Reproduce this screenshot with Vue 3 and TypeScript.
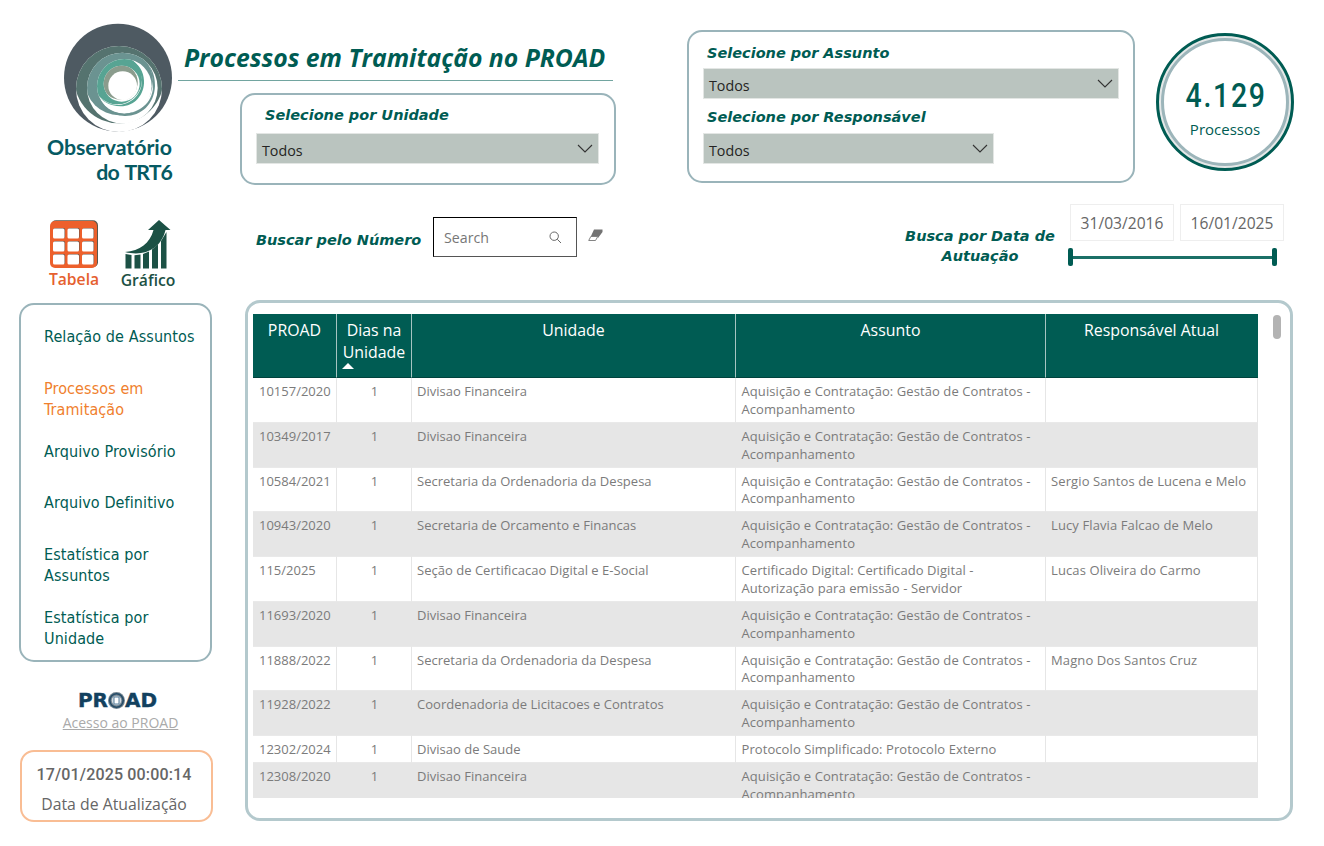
<script setup lang="ts">
interface Row {
  proad: string
  dias: number
  unidade: string
  assunto: string
  responsavel: string
}

interface NavItem {
  label: string
  active?: boolean
}

const gestao = 'Aquisição e Contratação: Gestão de Contratos - Acompanhamento'

const rows: Row[] = [
  { proad: '10157/2020', dias: 1, unidade: 'Divisao Financeira', assunto: gestao, responsavel: '' },
  { proad: '10349/2017', dias: 1, unidade: 'Divisao Financeira', assunto: gestao, responsavel: '' },
  { proad: '10584/2021', dias: 1, unidade: 'Secretaria da Ordenadoria da Despesa', assunto: gestao, responsavel: 'Sergio Santos de Lucena e Melo' },
  { proad: '10943/2020', dias: 1, unidade: 'Secretaria de Orcamento e Financas', assunto: gestao, responsavel: 'Lucy Flavia Falcao de Melo' },
  { proad: '115/2025', dias: 1, unidade: 'Seção de Certificacao Digital e E-Social', assunto: 'Certificado Digital: Certificado Digital - Autorização para emissão - Servidor', responsavel: 'Lucas Oliveira do Carmo' },
  { proad: '11693/2020', dias: 1, unidade: 'Divisao Financeira', assunto: gestao, responsavel: '' },
  { proad: '11888/2022', dias: 1, unidade: 'Secretaria da Ordenadoria da Despesa', assunto: gestao, responsavel: 'Magno Dos Santos Cruz' },
  { proad: '11928/2022', dias: 1, unidade: 'Coordenadoria de Licitacoes e Contratos', assunto: gestao, responsavel: '' },
  { proad: '12302/2024', dias: 1, unidade: 'Divisao de Saude', assunto: 'Protocolo Simplificado: Protocolo Externo', responsavel: '' },
  { proad: '12308/2020', dias: 1, unidade: 'Divisao Financeira', assunto: gestao, responsavel: '' },
]

const nav: NavItem[] = [
  { label: 'Relação de Assuntos' },
  { label: 'Processos em Tramitação', active: true },
  { label: 'Arquivo Provisório' },
  { label: 'Arquivo Definitivo' },
  { label: 'Estatística por Assuntos' },
  { label: 'Estatística por Unidade' },
]

// Each ring is a white disc (x, y, r) with a coloured disc (cx, cy, cr) clipped to it.
const rings = [
  { x: 267, y: 237, r: 129, cx: 267, cy: 206, cr: 134, color: '#55736f' },
  { x: 277, y: 234, r: 106, cx: 267, cy: 213.6, cr: 101.8, color: '#6b9391' },
  { x: 283, y: 229, r: 82, cx: 262, cy: 209, cr: 74, color: '#57a493' },
  { x: 275, y: 221, r: 54, cx: 270, cy: 216, cr: 53, color: '#8b9c8d' },
]
const cells = [3, 17.5, 32].flatMap((x) => [8.5, 21.5, 34.5].map((y) => ({ x, y })))
</script>

<template>
  <div class="page">
    <header class="top">
      <div class="brand">
        <svg class="brand-logo" width="110" height="110" viewBox="99 39 330 330">
          <defs>
            <clipPath v-for="(ring, i) in rings" :id="`ring-${i}`" :key="i">
              <circle :cx="ring.x" :cy="ring.y" :r="ring.r" />
            </clipPath>
          </defs>
          <circle cx="264" cy="203" r="162" fill="#4e5a62" />
          <template v-for="(ring, i) in rings" :key="i">
            <circle :cx="ring.x" :cy="ring.y" :r="ring.r" fill="#fff" />
            <circle :cx="ring.cx" :cy="ring.cy" :r="ring.cr" :fill="ring.color" :clip-path="`url(#ring-${i})`" />
          </template>
          <path d="M203 250C216 294 250 312 284 311C336 308 372 270 369 222C368 198 363 181 358 168C371 187 375 205 375 228C373 284 332 319 284 318C245 317 213 294 203 250Z" fill="#6b9391" />
          <path d="M203 250C213 273 240 285 266 285C312 282 337 245 336 210C333 183 320 163 303 150C326 162 341 184 342 212C344 253 314 289 272 289C240 289 213 274 203 250Z" fill="#57a493" />
          <path d="M290 168C306 176 321 197 322 220C322 248 304 269 278 272C306 268 316 246 315 222C314 197 306 180 290 168Z" fill="#8b9c8d" />
          <circle cx="278" cy="227" r="43" fill="#fff" />
        </svg>
        <div class="brand-name">Observatório<br /><span>do TRT6</span></div>
      </div>

      <div class="heading">
        <h1><span>Processos em Tramitação no PROAD</span></h1>
        <section class="panel unit-panel">
          <label class="field-label">Selecione por Unidade</label>
          <div class="select">
            <span>Todos</span>
            <svg width="16" height="10" viewBox="0 0 16 10"><path d="M1 1L8 8L15 1" /></svg>
          </div>
        </section>
      </div>

      <section class="panel subject-panel">
        <label class="field-label">Selecione por Assunto</label>
        <div class="select">
          <span>Todos</span>
          <svg width="16" height="10" viewBox="0 0 16 10"><path d="M1 1L8 8L15 1" /></svg>
        </div>
        <label class="field-label second">Selecione por Responsável</label>
        <div class="select narrow">
          <span>Todos</span>
          <svg width="16" height="10" viewBox="0 0 16 10"><path d="M1 1L8 8L15 1" /></svg>
        </div>
      </section>

      <div class="total">
        <div class="total-inner">
          <strong>4.129</strong>
          <span>Processos</span>
        </div>
      </div>
    </header>

    <div class="body">
      <aside>
        <div class="views">
          <div class="view tabela">
            <svg width="48" height="48" viewBox="0 0 48 48">
              <rect x="1" y="0.200" width="47" height="47" rx="5" fill="#59584e" />
              <rect x="0" y="1" width="47" height="47" rx="5" fill="#ed602c" />
              <g v-for="(cell, i) in cells" :key="i">
                <rect :x="cell.x + 0.6" :y="cell.y - 0.6" width="11.500" height="10" rx="1.500" fill="#6e5548" />
                <rect :x="cell.x" :y="cell.y" width="11.500" height="10" rx="1.500" fill="#fff" />
              </g>
            </svg>
            <span>Tabela</span>
          </div>
          <div class="view grafico">
            <svg width="46" height="49" viewBox="0 0 46 49">
              <g fill="#1c5145">
                <path d="M0.500 34L6.500 35V48.500H0.500Z" />
                <path d="M9.500 35.300L15.500 34.500V48.500H9.500Z" />
                <path d="M18 34L24 31.500V48.500H18Z" />
                <path d="M27 29.500L33 24.500V48.500H27Z" />
                <path d="M36 21L41.500 12V48.500H36Z" />
                <path d="M0 32C15 31 25 23 28.500 10H23L34 0L45.500 10H40.500C36 29 19 37 0 32Z" />
              </g>
            </svg>
            <span>Gráfico</span>
          </div>
        </div>

        <nav class="panel menu">
          <a v-for="item in nav" :key="item.label" :class="{ active: item.active }">{{ item.label }}</a>
        </nav>

        <div class="proad">
          <div class="proad-logo">
            <span>PR</span>
            <svg width="19" height="19" viewBox="0 0 19 19">
              <circle cx="9.500" cy="9.500" r="8.500" fill="#75848f" />
              <circle cx="9.500" cy="9.500" r="6.700" fill="none" stroke="#254c68" stroke-width="1.600" />
              <circle cx="9.500" cy="9.500" r="4.800" fill="#d3dce2" />
              <rect x="7" y="6" width="5" height="7" fill="#fff" stroke="#577d99" />
            </svg>
            <span>AD</span>
          </div>
          <a>Acesso ao PROAD</a>
        </div>

        <div class="updated">
          <strong>17/01/2025 00:00:14</strong>
          <span>Data de Atualização</span>
        </div>
      </aside>

      <main>
        <div class="tools">
          <label class="field-label number-label">Buscar pelo Número</label>
          <div class="search">
            <span>Search</span>
            <svg width="13" height="13" viewBox="0 0 13 13"><circle cx="5.200" cy="5.200" r="4.200" /><path d="M8.300 8.300L12 12" /></svg>
          </div>
          <svg class="eraser" width="15" height="13" viewBox="0 0 15 13">
            <path d="M6 0.500H14.500V3L10 9L9.500 7.500H2.800Z" fill="#737373" />
            <path d="M2.800 7.500H9.800L7.500 11.500H0.700Z" fill="#fff" stroke="#777" stroke-width="0.900" />
          </svg>
          <label class="field-label date-label">Busca por Data de<br />Autuação</label>
          <div class="dates">
            <div class="date-inputs">
              <span>31/03/2016</span>
              <span>16/01/2025</span>
            </div>
            <div class="slider"><i></i><b></b><i></i></div>
          </div>
        </div>

        <section class="table-panel">
          <div class="table">
            <div class="row head">
              <div>PROAD</div>
              <div class="sorted">Dias na Unidade<svg width="12" height="6" viewBox="0 0 12 6"><path d="M0 6L6 0L12 6Z" fill="#fff" /></svg></div>
              <div>Unidade</div>
              <div>Assunto</div>
              <div>Responsável Atual</div>
            </div>
            <div v-for="row in rows" :key="row.proad" class="row">
              <div>{{ row.proad }}</div>
              <div class="center">{{ row.dias }}</div>
              <div class="unidade">{{ row.unidade }}</div>
              <div class="assunto">{{ row.assunto }}</div>
              <div class="responsavel">{{ row.responsavel }}</div>
            </div>
          </div>
          <div class="scroll-thumb"></div>
        </section>
      </main>
    </div>
  </div>
</template>

<style>
body {
  background: #fff;
}
</style>

<style scoped>
.page,
.page * {
  box-sizing: border-box;
}

.page {
  width: 1324px;
  height: 846px;
  overflow: hidden;
  font-family: "Open Sans", "Noto Sans", sans-serif;
  color: #005c53;
  background: #fff;
}

.top {
  display: flex;
  align-items: flex-start;
  height: 200px;
}

.brand {
  width: 178px;
  padding: 23px 6px 0 0;
  text-align: right;
}

.brand-logo {
  display: block;
  margin-left: 63px;
}

.brand-name {
  margin-top: 2px;
  font: 700 21.300px/25px Lato, sans-serif;
  color: #065a63;
  white-space: nowrap;
}

.brand-name span {
  letter-spacing: -0.900px;
  word-spacing: 2px;
}

.heading {
  width: 438px;
  margin-right: 71px;
  padding-top: 38px;
}

h1 {
  width: 435px;
  height: 43px;
  margin: 0 0 12px;
  padding-left: 6px;
  border-bottom: 1px solid #72a5a0;
  font-size: 24.750px;
  font-style: italic;
  font-weight: 700;
  line-height: 40px;
  white-space: nowrap;
}

.panel {
  border: 2px solid #9ab4ba;
  border-radius: 15px;
}

.unit-panel {
  width: 376px;
  height: 92px;
  margin-left: 62px;
  padding: 10px 15px 0 14px;
}

.field-label {
  display: block;
  font: italic 700 14.500px/20px "DejaVu Sans", sans-serif;
  white-space: nowrap;
}

.unit-panel .field-label {
  margin: 0 0 8px 9px;
}

.select {
  display: flex;
  align-items: center;
  justify-content: space-between;
  height: 31px;
  padding: 0 5px;
  border: 1px solid #e3e6e4;
  background: #bac4bf;
  color: #252423;
  font-size: 14.300px;
}

.select span {
  padding-top: 3px;
}

.select svg {
  fill: none;
  stroke: #333;
  stroke-width: 1.1;
}

.subject-panel {
  width: 448px;
  height: 153px;
  margin-top: 30px;
  padding: 11px 14px 0 14px;
}

.subject-panel .field-label {
  margin: 0 0 5px 4px;
}

.subject-panel .field-label.second {
  margin: 8px 0 6px 4px;
}

.narrow {
  width: 291px;
}

.total {
  width: 138px;
  height: 138px;
  margin: 33px 0 0 21px;
  padding: 2px;
  border: 3px solid #005c53;
  border-radius: 50%;
  background: #e5e8e8;
}

.total-inner {
  display: flex;
  flex-direction: column;
  align-items: center;
  height: 100%;
  padding-top: 36px;
  border: 3px solid #9cb5ba;
  border-radius: 50%;
  background: #fff;
}

.total strong {
  font: 500 33px/38px Roboto, sans-serif;
  letter-spacing: 2px;
  margin-right: -2px;
  transform: scaleX(0.86);
}

.total span {
  margin-top: 2px;
  font-size: 15px;
  line-height: 24px;
}

.body {
  display: flex;
}

aside {
  width: 245px;
  padding-left: 19px;
}

.views {
  display: flex;
  gap: 22px;
  height: 103px;
  padding: 20px 0 0 30px;
}

.view {
  display: flex;
  flex-direction: column;
  align-items: center;
  font-size: 15.700px;
  font-weight: 600;
  line-height: 20px;
}

.tabela {
  width: 50px;
  color: #e5602f;
}

.grafico {
  width: 54px;
  color: #1c5145;
}

.view svg {
  margin-bottom: 1px;
}

.menu {
  width: 193px;
  height: 359px;
  padding: 21px 10px 0 23px;
}

.menu a {
  display: block;
  width: 140px;
  min-height: 51.500px;
  font: 16px/21px "DejaVu Sans Condensed", "DejaVu Sans", sans-serif;
  font-stretch: condensed;
  letter-spacing: 0.100px;
}

.menu a:first-child {
  width: 160px;
}

.menu a:nth-child(2),
.menu a:nth-child(5) {
  min-height: 63px;
}

.menu a.active {
  color: #f07f2e;
}

.proad {
  width: 203px;
  margin-top: 28px;
  text-align: center;
}

.proad-logo {
  display: flex;
  align-items: center;
  justify-content: center;
  height: 21px;
  margin-right: 6px;
  font: 700 20px/21px "DejaVu Sans", sans-serif;
  color: #12415f;
  -webkit-text-stroke: 0.400px #12415f;
}

.proad-logo svg {
  margin: 0 -1px;
}

.proad a {
  display: block;
  margin-top: 1px;
  font-size: 14px;
  line-height: 22px;
  color: #aaa;
  text-decoration: underline;
}

.updated {
  display: flex;
  flex-direction: column;
  align-items: center;
  width: 193px;
  height: 72px;
  margin: 16px 0 0 1px;
  padding: 11px 5px 0 0;
  border: 2px solid #f9bd94;
  border-radius: 14px;
  color: #666;
}

.updated strong {
  font: 500 16px/24px Roboto, sans-serif;
  letter-spacing: 0.150px;
}

.updated span {
  margin-top: 5px;
  font-size: 15.800px;
  line-height: 24px;
}

.tools {
  display: flex;
  align-items: flex-start;
  height: 100px;
}

.number-label {
  width: 177px;
  margin-left: 11px;
  padding-top: 30px;
}

.search {
  display: flex;
  align-items: center;
  justify-content: space-between;
  width: 144px;
  height: 40px;
  margin-top: 17px;
  padding: 0 14px 0 10px;
  border: 1px solid #000;
  border-right-color: #555;
  border-bottom-color: #555;
  color: #777;
  font-size: 14.200px;
}

.search svg {
  fill: none;
  stroke: #666;
}

.eraser {
  margin: 29px 0 0 11px;
}

.date-label {
  width: 150px;
  margin: 26px 0 0 302px;
  text-align: center;
}

.dates {
  width: 215px;
  margin: 4px 0 0 15px;
}

.date-inputs {
  display: flex;
  gap: 6px;
}

.date-inputs span {
  width: 104px;
  height: 37px;
  border: 1px solid #eee;
  color: #666;
  font-size: 15.600px;
  line-height: 36px;
  text-align: center;
}

.slider {
  display: flex;
  align-items: center;
  width: 209px;
  margin: 7px 0 0 -2px;
}

.slider i {
  width: 5px;
  height: 18px;
  border-radius: 2px;
  background: #005c53;
}

.slider b {
  flex: 1;
  height: 3px;
  background: #1b7067;
}

.table-panel {
  display: flex;
  justify-content: space-between;
  width: 1048px;
  height: 521px;
  padding: 11px 9px 0 5px;
  border: 3px solid #b4c9cd;
  border-radius: 15px;
}

.table {
  width: 1005px;
  height: 484px;
  overflow: hidden;
}

.row {
  display: grid;
  grid-template-columns: 84px 75px 324px 310px 212px;
  color: #7b7b7b;
  font-size: 13px;
  line-height: 17.880px;
}

.row > div {
  padding: 5px 5px 3px 6px;
  border-right: 1px solid #e6e6e6;
  border-bottom: 1px solid #e9e9e9;
}

.row > .unidade {
  padding-left: 5px;
  letter-spacing: 0.020px;
}

.row > .assunto {
  padding-left: 5.500px;
  letter-spacing: 0.080px;
}

.row > .responsavel {
  padding-left: 5px;
  letter-spacing: 0.110px;
  white-space: nowrap;
}

.row:nth-child(odd) {
  background: #e6e6e6;
}

.row > .center {
  text-align: center;
}

.row.head {
  height: 64px;
  background: #005c53;
  color: #fff;
  font-size: 15.900px;
  line-height: 22px;
  text-align: center;
}

.row.head > div {
  padding: 5px 4px 0;
  border-right-color: #a6c4c1;
  border-bottom-color: #00433d;
}

.row.head > div:last-child {
  border-right-color: #005c53;
}

.sorted svg {
  display: block;
  margin-left: 1px;
}

.scroll-thumb {
  width: 8px;
  height: 24px;
  margin-top: 1px;
  border-radius: 4px;
  background: #b3b3b3;
}
</style>
